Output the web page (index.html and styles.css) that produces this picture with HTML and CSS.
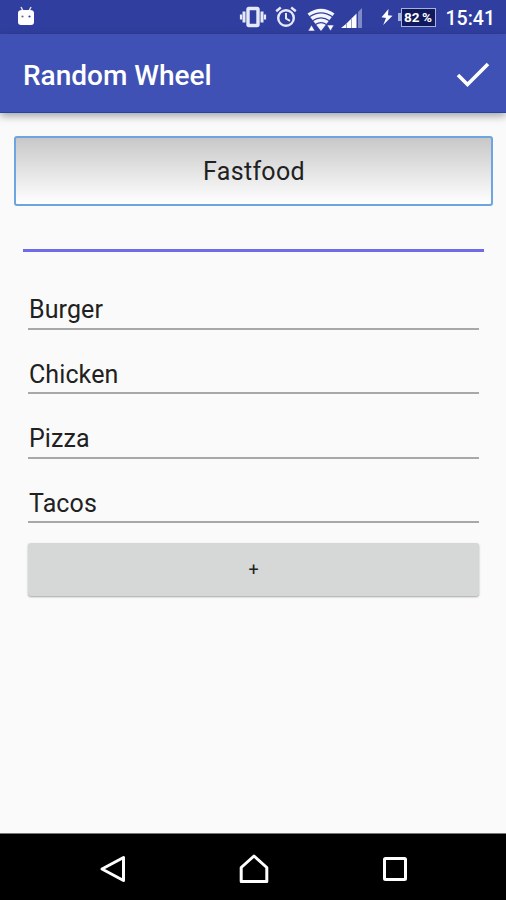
FILE: index.html
```html
<!DOCTYPE html>
<html lang="en">
<head>
    <meta charset="utf-8">
    <title>Random Wheel</title>
    <link rel="stylesheet" href="styles.css">
</head>
<body>
    <div class="status-bar">
        <svg class="icon-android" width="18" height="20" viewBox="0 0 18 20">
            <path d="M4 1l2 4M14 1l-2 4" stroke="#dfe3fa" stroke-width="1.5"/>
            <path d="M1 7q0-3 4-3h8q4 0 4 3v9q0 3-3 3H4q-3 0-3-3z" fill="#fff"/>
            <circle cx="5.500" cy="10.500" r="1.1" fill="#666a90"/>
            <circle cx="12.500" cy="10.500" r="1.1" fill="#30409f"/>
        </svg>
        <div class="status-right">
            <svg class="icon-vibrate" width="28" height="22" viewBox="0 0 28 22">
                <rect x="9" y="2.500" width="10" height="17" rx="1" fill="#303f9f" stroke="#e6e9fa" stroke-width="3.400"/>
                <path d="M5 5.500v11M23 5.500v11" stroke="#e6e9fa" stroke-width="3"/>
                <path d="M2 8.500v5M26 8.500v5" stroke="#e6e9fa" stroke-width="2.200"/>
            </svg>
            <svg class="icon-alarm" width="22" height="22" viewBox="0 0 22 22" fill="none" stroke="#e6e9fa">
                <circle cx="11" cy="12" r="7.800" stroke-width="2.400"/>
                <path d="M1.200 5.200L5.800 1.500M20.800 5.200L16.200 1.500" stroke-width="2.400"/>
                <path d="M11 7v5.500l4 2.300" stroke-width="2"/>
            </svg>
            <svg class="icon-wifi" width="28" height="24" viewBox="0 0 28 24">
                <path d="M0.500 5.500Q14-4 27.500 5.500L14 23z" fill="#f4f5fd"/>
                <path d="M2.500 8.800Q14 .8 25.500 8.800M5.500 12.800Q14 6.800 22.500 12.800M8.500 16.500Q14 12.800 19.500 16.500" fill="none" stroke="#303f9f" stroke-width="1.200"/>
                <path d="M1 23l3.500-6L8 23z" fill="#fff" stroke="#303f9f" stroke-width=".6"/>
                <path d="M20 17h7l-3.500 6z" fill="#fff" stroke="#303f9f" stroke-width=".6"/>
            </svg>
            <svg class="icon-signal" width="22" height="20" viewBox="0 0 22 20">
                <path d="M0 20L5 16v4z" fill="#fff"/>
                <path d="M5.500 15.500L10 11v9H5.500z" fill="#fff"/>
                <path d="M10.500 10.500L15.500 5.500V20h-5z" fill="#fff"/>
                <path d="M17 4l4-4v20h-4z" fill="#7f8ac8"/>
            </svg>
            <svg class="icon-charge" width="12" height="16" viewBox="0 0 12 16">
                <path d="M7.500 0L.5 8.200l4.500.8L2.200 16 11.500 6.800 7 6.300z" fill="#fff"/>
            </svg>
            <div class="battery">82 %</div>
            <div class="clock">15:41</div>
        </div>
    </div>

    <div class="app-bar">
        <h1>Random Wheel</h1>
        <svg class="icon-done" width="34" height="27" viewBox="0 0 34 27">
            <path d="M2 14l9.500 9.500L32 3" fill="none" stroke="#fff" stroke-width="3.600"/>
        </svg>
    </div>

    <div class="content">
        <button class="wheel-name">Fastfood</button>
        <div class="name-line"></div>
        <div class="options">
            <div class="option">Burger</div>
            <div class="option">Chicken</div>
            <div class="option">Pizza</div>
            <div class="option">Tacos</div>
            <button class="add">+</button>
        </div>
    </div>

    <div class="nav-bar">
        <svg width="30" height="30" viewBox="0 0 30 30">
            <path d="M25.500 3.500v23L4 15z"/>
        </svg>
        <svg width="30" height="30" viewBox="0 0 30 30">
            <path d="M2.200 27.500V13.500L15 2l12.800 11.500v14z"/>
        </svg>
        <svg width="30" height="30" viewBox="0 0 30 30">
            <rect x="4.500" y="4.500" width="21" height="21" rx="1"/>
        </svg>
    </div>
</body>
</html>
```

FILE: styles.css
```css
* {
    box-sizing: border-box;
}

body {
    margin: 0;
    height: 900px;
    display: flex;
    flex-direction: column;
    font-family: Roboto, "Liberation Sans", sans-serif;
    color: #212121;
    background: #fafafa;
    overflow: hidden;
}

svg {
    display: block;
    flex: none;
}

.status-bar {
    height: 34px;
    display: flex;
    justify-content: space-between;
    align-items: center;
    padding: 0 11px 0 17px;
    background: #303f9f;
    color: #fff;
}

.status-right {
    display: flex;
    align-items: center;
}

.icon-android {
    margin-bottom: 3px;
}

.icon-alarm {
    margin-left: 8px;
}

.icon-wifi {
    margin: 5px 0 0 10px;
}

.icon-signal {
    margin: 2px 0 0 6px;
}

.icon-charge {
    margin-left: 18px;
}

.battery {
    position: relative;
    width: 35px;
    height: 19px;
    margin-left: 8px;
    border: 1px solid #a9b1df;
    background: #10195c;
    font-size: 13.5px;
    font-weight: 700;
    line-height: 17px;
    text-align: center;
    white-space: nowrap;
    word-spacing: -1px;
}

/* battery terminal */
.battery::before {
    content: "";
    position: absolute;
    left: -4px;
    top: 4px;
    width: 3px;
    height: 8px;
    background: #a9b1df;
}

.clock {
    margin: 4px 0 0 10px;
    font-size: 19.5px;
    font-weight: 500;
    line-height: 24px;
}

.app-bar {
    position: relative;
    height: 79px;
    display: flex;
    justify-content: space-between;
    align-items: center;
    padding: 2px 16px 0 23px;
    background: #3f51b5;
    border-bottom: 1px solid #2344a4;
    box-shadow: 0 3px 8px rgba(0, 0, 0, 0.35);
}

h1 {
    margin: 2px 0 0;
    font-size: 28px;
    font-weight: 500;
    color: #fff;
}

.content {
    flex: 1;
    padding: 23px 13px 0 14px;
}

button {
    display: block;
    width: 100%;
    padding: 0;
    font-family: inherit;
    color: #212121;
}

.wheel-name {
    height: 70px;
    padding-left: 1px;
    font-size: 25px;
    letter-spacing: 0.3px;
    border: 2px solid #6da5e0;
    border-radius: 3px;
    background: linear-gradient(#c8c8c8, #fff);
}

.name-line {
    height: 3px;
    margin: 43px 9px 0;
    background: #6f6be8;
}

.options {
    padding: 13px 14px 0;
}

.option {
    height: 64.5px;
    padding: 30px 0 0 1px;
    font-size: 25px;
    letter-spacing: 0.1px;
    line-height: 30px;
    border-bottom: 2px solid #a8a8a8;
}

.add {
    height: 53px;
    margin-top: 20px;
    font-size: 18px;
    border: none;
    border-radius: 3px;
    background: #d6d7d7;
    box-shadow: 0 1px 2px rgba(0, 0, 0, 0.35);
}

.nav-bar {
    height: 67px;
    display: flex;
    justify-content: center;
    align-items: center;
    gap: 111px;
    padding: 3px 0 0 1px;
    background: #000;
    border-top: 1px solid #777;
}

.nav-bar svg {
    fill: none;
    stroke: #fff;
    stroke-width: 3;
    stroke-linejoin: round;
}
```
